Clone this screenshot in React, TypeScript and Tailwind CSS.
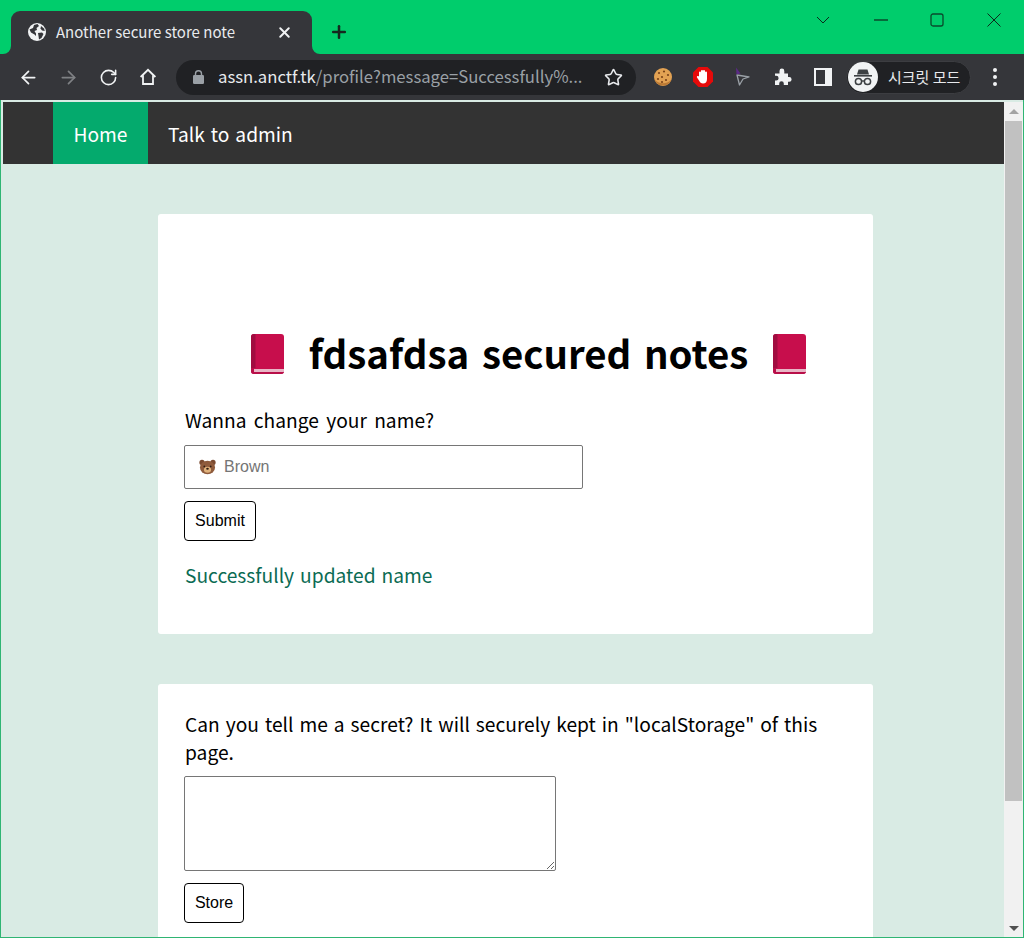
import React from 'react';
import { ArrowLeft, ArrowRight, RotateCw, Star, X, Plus } from 'lucide-react';

const uiFont = { fontFamily: '"Noto Sans CJK KR", "Noto Sans", sans-serif' };

const GlobeIcon = () => (
  <svg width="18" height="18" viewBox="0 0 18 18" className="shrink-0">
    <circle cx="9" cy="9" r="9" fill="#f1f3f4" />
    <path d="M1.5 6.5 L5 5 L6 2 L9.5 1 L11 3 L8.5 5 L9 7 L6.5 8 L8 10.5 L8 13 L6.5 11.5 L3 9.5 Z" fill="#35363a" />
    <path d="M10 10 L14 9.5 L15.5 11 L13.5 15 L11 16.5 L10.5 13 Z" fill="#35363a" />
    <path d="M13 3 L16 5.5 L16.8 8 L14 7.5 L12.5 5.5 Z" fill="#35363a" />
  </svg>
);

const HomeIcon = () => (
  <svg width="18" height="18" viewBox="0 0 18 18" fill="none" stroke="#f1f3f4" strokeWidth="1.8" strokeLinejoin="miter">
    <path d="M1.6 9 L9 1.8 L16.4 9" />
    <path d="M4 7.2 V16 H14 V7.2" />
  </svg>
);

const LockIcon = () => (
  <svg width="11" height="14" viewBox="0 0 11 14" className="shrink-0">
    <path d="M2.5 5.5 V3.8 a3 3 0 0 1 6 0 V5.5" fill="none" stroke="#9aa0a6" strokeWidth="1.4" />
    <rect x="0" y="5" width="11" height="9" rx="1.2" fill="#9aa0a6" />
  </svg>
);

const CookieIcon = () => (
  <svg width="20" height="20" viewBox="0 0 20 20">
    <circle cx="10" cy="10" r="9" fill="#e3a253" />
    <path d="M1.5 12.5 A9 9 0 0 0 18.5 12.5 A10 8 0 0 1 1.5 12.5Z" fill="#bb7a35" />
    {[[6, 6], [11, 4.5], [15, 8], [9, 10], [5, 12], [13, 13], [9, 15]].map(([x, y]) => (
      <circle key={`${x}-${y}`} cx={x} cy={y} r="1.1" fill="#7a4419" />
    ))}
  </svg>
);

const StopHandIcon = () => (
  <svg width="22" height="22" viewBox="0 0 22 22">
    <path d="M6.5 1 H15.5 L21 6.5 V15.5 L15.5 21 H6.5 L1 15.5 V6.5 Z" fill="#e60a0a" />
    <path d="M7 10 V6.5 a1 1 0 0 1 2 0 V5 a1 1 0 0 1 2 0 a1 1 0 0 1 2 0 V6.5 a1 1 0 0 1 2 0 V13 c0 3 -1.5 4.5 -4 4.5 c-2 0 -3 -1 -4 -3 L5 11.5 c-.6 -1 .8 -2 1.5 -1 Z" fill="#fff" />
  </svg>
);

const CursorIcon = () => (
  <svg width="16" height="20" viewBox="0 0 16 20" fill="none">
    <path d="M2 8 L14 10 L8 12 L4.5 18 Z" stroke="#9aa0a6" strokeWidth="1.3" strokeLinejoin="round" />
    <path d="M1 0.5 L5.5 6.5 L1.5 7.5 Z" fill="#5b2a86" />
  </svg>
);

const PuzzleIcon = () => (
  <svg width="18" height="18" viewBox="0 0 18 18">
    <path d="M1 5.5 H5.5 V3 a2.4 2.4 0 0 1 4.8 0 V5.5 H14 V9 h1.2 a2.4 2.4 0 0 1 0 4.8 H14 V17 H9.8 v-1.4 a2.3 2.3 0 0 0 -4.6 0 V17 H1 V12.6 h1.2 a2.4 2.4 0 0 0 0 -4.8 H1 Z" fill="#f1f3f4" />
  </svg>
);

const SidePanelIcon = () => (
  <svg width="18" height="18" viewBox="0 0 18 18">
    <path d="M0 0 H18 V18 H0 Z M2 2 V16 H11 V2 Z" fill="#f1f3f4" fillRule="evenodd" />
  </svg>
);

const IncognitoIcon = () => (
  <svg width="30" height="30" viewBox="0 0 30 30">
    <circle cx="15" cy="15" r="15" fill="#f1f3f4" />
    <path d="M10.5 7.5 H19.5 L21 12.5 H9 Z" fill="#3c4043" />
    <rect x="6" y="13" width="18" height="1.6" fill="#3c4043" />
    <circle cx="10.5" cy="19.5" r="3.1" fill="none" stroke="#3c4043" strokeWidth="1.5" />
    <circle cx="19.5" cy="19.5" r="3.1" fill="none" stroke="#3c4043" strokeWidth="1.5" />
    <path d="M13.5 19 H16.5" stroke="#3c4043" strokeWidth="1.4" />
  </svg>
);

const BookIcon = () => (
  <svg width="33" height="40" viewBox="0 0 33 40" className="shrink-0 mt-[4px]">
    <path d="M3 0 H30 a3 3 0 0 1 3 3 V37 a3 3 0 0 1 -3 3 H3 a3 3 0 0 1 -3 -3 V3 a3 3 0 0 1 3 -3 Z" fill="#c70e4c" />
    <path d="M3 0 H4.5 V34 H0 V3 a3 3 0 0 1 3 -3 Z" fill="#a10c40" />
    <path d="M3 35 H33 V38 H3 Z" fill="#e8b6c6" />
    <path d="M0 34 H3 V38 H33 V37 a3 3 0 0 1 -3 3 H3 a3 3 0 0 1 -3 -3 Z" fill="#b80f49" />
  </svg>
);

const BearIcon = () => (
  <svg width="17" height="16" viewBox="0 0 18 16">
    <circle cx="3.2" cy="3.2" r="2.8" fill="#7a4a30" />
    <circle cx="14.8" cy="3.2" r="2.8" fill="#7a4a30" />
    <ellipse cx="9" cy="8.5" rx="8" ry="7.2" fill="#8f5b3c" />
    <ellipse cx="9" cy="11" rx="3.8" ry="3.2" fill="#e0b27c" />
    <circle cx="5.6" cy="7.4" r="0.9" fill="#2b1a10" />
    <circle cx="12.4" cy="7.4" r="0.9" fill="#2b1a10" />
    <ellipse cx="9" cy="9.8" rx="1.4" ry="1" fill="#2b1a10" />
  </svg>
);

const WindowControls = () => (
  <div className="ml-auto self-start flex items-center h-[40px]">
    <svg width="14" height="8" viewBox="0 0 14 8" fill="none" stroke="#0c2a1b" strokeWidth="1" className="mr-[44px]">
      <path d="M1 1 L7 7 L13 1" />
    </svg>
    <svg width="14" height="2" viewBox="0 0 14 2" fill="none" stroke="#0c2a1b" strokeWidth="1.2" className="mr-[42px]">
      <path d="M0 1 H14" />
    </svg>
    <svg width="14" height="14" viewBox="0 0 14 14" fill="none" stroke="#0a4a2c" strokeWidth="1.3" className="mr-[43px]">
      <rect x="1" y="1" width="12" height="12" rx="2" />
    </svg>
    <svg width="14" height="14" viewBox="0 0 14 14" fill="none" stroke="#0c2a1b" strokeWidth="1" className="mr-[23px]">
      <path d="M0.5 0.5 L13.5 13.5 M13.5 0.5 L0.5 13.5" />
    </svg>
  </div>
);

const ToolbarIcon = ({ children }: { children: React.ReactNode }) => (
  <div className="w-10 flex items-center justify-center shrink-0">{children}</div>
);

const BrowserChrome = () => (
  <div style={uiFont} className="shrink-0">
    <div className="h-[54px] bg-[#00cd6c] flex items-end pl-[11px] relative">
      <div className="h-[43px] w-[301px] bg-[#35363a] rounded-t-[9px] flex items-start pt-[12px] pl-[17px] pr-[19px] relative">
        <svg width="8" height="8" viewBox="0 0 8 8" className="absolute left-[-8px] bottom-0">
          <path d="M8 0 V8 H0 A8 8 0 0 0 8 0Z" fill="#35363a" />
        </svg>
        <svg width="8" height="8" viewBox="0 0 8 8" className="absolute right-[-8px] bottom-0">
          <path d="M0 0 V8 H8 A8 8 0 0 1 0 0Z" fill="#35363a" />
        </svg>
        <GlobeIcon />
        <span className="ml-[10px] text-[15px] leading-[18px] text-[#e8eaed] whitespace-nowrap flex-1">Another secure store note</span>
        <X size={17} strokeWidth={2.8} className="text-[#f1f3f4] mt-[1px]" />
      </div>
      <Plus size={20} strokeWidth={3} className="text-[#16281f] ml-[17px] mb-[12px]" />
      <WindowControls />
    </div>
    <div className="h-[46px] bg-[#35363a] flex items-center pl-[8px] pr-[8px]">
      <ToolbarIcon><ArrowLeft size={21} strokeWidth={2} className="text-[#f1f3f4]" /></ToolbarIcon>
      <ToolbarIcon><ArrowRight size={21} strokeWidth={2} className="text-[#7f8184]" /></ToolbarIcon>
      <ToolbarIcon><RotateCw size={19} strokeWidth={2} className="text-[#f1f3f4]" /></ToolbarIcon>
      <ToolbarIcon><HomeIcon /></ToolbarIcon>
      <div className="w-[460px] h-[35px] ml-[8px] rounded-full bg-[#202124] flex items-center pl-[17px] pr-[13px] shrink-0">
        <LockIcon />
        <span className="ml-[14px] text-[16.7px] text-[#e8eaed] whitespace-nowrap">assn.anctf.tk<span className="text-[#9aa0a6]">/profile?message=Successfully%...</span></span>
        <Star size={19} strokeWidth={2} className="ml-auto text-[#e8eaed] shrink-0" />
      </div>
      <div className="w-[7px] shrink-0" />
      <ToolbarIcon><CookieIcon /></ToolbarIcon>
      <ToolbarIcon><StopHandIcon /></ToolbarIcon>
      <ToolbarIcon><CursorIcon /></ToolbarIcon>
      <ToolbarIcon><PuzzleIcon /></ToolbarIcon>
      <ToolbarIcon><SidePanelIcon /></ToolbarIcon>
      <div className="w-[125px] h-[33px] ml-[3px] rounded-full bg-[#202124] border border-[#3c3d41] flex items-center pl-[1px] shrink-0">
        <IncognitoIcon />
        <span className="ml-[10px] text-[15px] text-[#e8eaed] whitespace-nowrap">시크릿 모드</span>
      </div>
      <div className="ml-[22px] flex flex-col gap-[3px]">
        <div className="w-[4px] h-[4px] rounded-full bg-[#f1f3f4]" />
        <div className="w-[4px] h-[4px] rounded-full bg-[#f1f3f4]" />
        <div className="w-[4px] h-[4px] rounded-full bg-[#f1f3f4]" />
      </div>
    </div>
  </div>
);

const Scrollbar = () => (
  <div className="w-[19px] bg-[#f1f1f1] flex flex-col items-center shrink-0">
    <div className="h-[19px] flex items-center justify-center w-full">
      <div className="w-0 h-0 border-l-[5px] border-r-[5px] border-b-[5px] border-l-transparent border-r-transparent border-b-[#a3a3a3]" />
    </div>
    <div className="w-[17px] h-[680px] bg-[#c1c1c1]" />
    <div className="flex-1" />
    <div className="h-[18px] flex items-center justify-center w-full">
      <div className="w-0 h-0 border-l-[5px] border-r-[5px] border-t-[5px] border-l-transparent border-r-transparent border-t-[#505050]" />
    </div>
  </div>
);

export default function App() {
  return (
    <div className="h-[938px] w-[1024px] overflow-hidden flex flex-col bg-[#00cd6c]">
      <BrowserChrome />
      <div className="flex-1 min-h-0 flex flex-col border-l border-r border-b border-[#2fb573] bg-[#d9ebe4]">
        <div className="h-[2px] shrink-0 bg-[#d9ebe4]" />
        <div className="flex-1 min-h-0 flex">
          <div className="flex-1 min-w-0 overflow-hidden [word-spacing:1.7px]" style={uiFont}>
            <nav className="h-[62px] ml-[2px] bg-[#333333] flex pl-[50px] text-[19.2px] text-white">
              <a className="w-[95px] pt-[3px] flex items-center justify-center bg-[#04aa6d]">Home</a>
              <a className="pl-[20px] pt-[3px] flex items-center">Talk to admin</a>
            </nav>
            <div className="pt-[50px] pl-[157px] w-[872px]">
              <section className="w-[715px] h-[420px] bg-white rounded-[3px] px-[26px] pt-[114px]">
                <h1 className="flex items-center justify-center gap-[25px] pl-[26px] h-[48px] text-[38.4px] leading-[48px] font-bold text-black whitespace-nowrap [word-spacing:4px]">
                  <BookIcon />
                  <span>fdsafdsa secured notes</span>
                  <BookIcon />
                </h1>
                <p className="mt-[30px] pl-[1px] text-[19.2px] leading-[28px] text-black [word-spacing:3px]">Wanna change your name?</p>
                <div className="relative w-[399px] mt-[11px]">
                  <input
                    type="text"
                    placeholder="Brown"
                    className="w-full h-[44px] border border-[#767676] rounded-[2px] pl-[39px] text-[16px] placeholder-[#757575] bg-white"
                    style={{ fontFamily: '"Liberation Sans", sans-serif' }}
                  />
                  <div className="absolute left-[15px] top-[14px]"><BearIcon /></div>
                </div>
                <button
                  className="block mt-[12px] w-[72px] h-[40px] bg-white border border-black rounded-[4px] text-[16px] text-black"
                  style={{ fontFamily: '"Liberation Sans", sans-serif' }}
                >
                  Submit
                </button>
                <p className="mt-[21px] pl-[1px] text-[19.2px] leading-[27px] text-[#0b6b53]">Successfully updated name</p>
              </section>
              <section className="w-[715px] mt-[50px] h-[400px] bg-white rounded-[3px] px-[26px] pt-[26px]">
                <p className="pl-[1px] text-[19.2px] leading-[28px] text-black">Can you tell me a secret? It will securely kept in "localStorage" of this page.</p>
                <textarea className="block mt-[10px] w-[372px] h-[95px] border border-[#767676] rounded-[2px] bg-white" />
                <button
                  className="block mt-[12px] w-[60px] h-[40px] bg-white border border-black rounded-[4px] text-[16px] text-black"
                  style={{ fontFamily: '"Liberation Sans", sans-serif' }}
                >
                  Store
                </button>
              </section>
            </div>
          </div>
          <Scrollbar />
        </div>
      </div>
    </div>
  );
}
